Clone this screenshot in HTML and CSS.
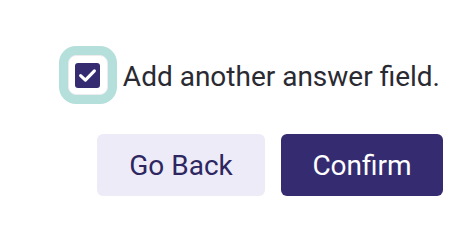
FILE: index.html
```html
<!DOCTYPE html>
<html>
<head>
<meta charset="utf-8">
<link rel="stylesheet" href="styles.css">
</head>
<body>
<div class="panel">
  <label class="check-row">
    <span class="check-box">
      <span class="check-fill">
        <svg width="25" height="25" viewBox="0 0 25 25"><path d="M5.6 12.6 L10.4 17.2 L19.4 7.9" fill="none" stroke="#fff" stroke-width="3.1" stroke-linecap="round" stroke-linejoin="round"/></svg>
      </span>
    </span>
    <span class="check-label">Add another answer field.</span>
  </label>
  <div class="actions">
    <button class="btn btn-secondary">Go Back</button>
    <button class="btn btn-primary">Confirm</button>
  </div>
</div>
</body>
</html>
```
FILE: styles.css
```css
html, body {
  margin: 0;
  padding: 0;
  background: #ffffff;
}
body {
  font-family: Roboto, "Liberation Sans", sans-serif;
  width: 470px;
  height: 218px;
}
.panel {
  display: flex;
  flex-direction: column;
  align-items: flex-end;
  padding: 55px 27px 0 0;
  gap: 39px;
}
.check-row {
  display: flex;
  align-items: center;
  gap: 15px;
  padding-right: 3px;
}
.check-box {
  width: 40px;
  height: 40px;
  box-sizing: border-box;
  background: #fff;
  border: 1px solid #ececef;
  border-radius: 8px;
  box-shadow: 0 0 0 9px #b4dfdb;
  display: flex;
  align-items: center;
  justify-content: center;
}
.check-fill {
  width: 25px;
  height: 25px;
  border-radius: 3px;
  background: #352b70;
  display: flex;
  align-items: center;
  justify-content: center;
}
.check-fill svg { display: block; }
.check-label {
  font-size: 28px;
  color: #2a2a32;
  line-height: 36px;
  padding-top: 4px;
}
.actions {
  display: flex;
  gap: 16px;
}
.btn {
  font-family: Roboto, "Liberation Sans", sans-serif;
  font-size: 28px;
  height: 62px;
  border: none;
  border-radius: 6px;
  padding: 0;
  cursor: pointer;
}
.btn-secondary {
  background: #eeebf8;
  color: #2d2660;
  width: 168px;
}
.btn-primary {
  background: #352b70;
  color: #ffffff;
  font-weight: 400;
  width: 162px;
}
```
